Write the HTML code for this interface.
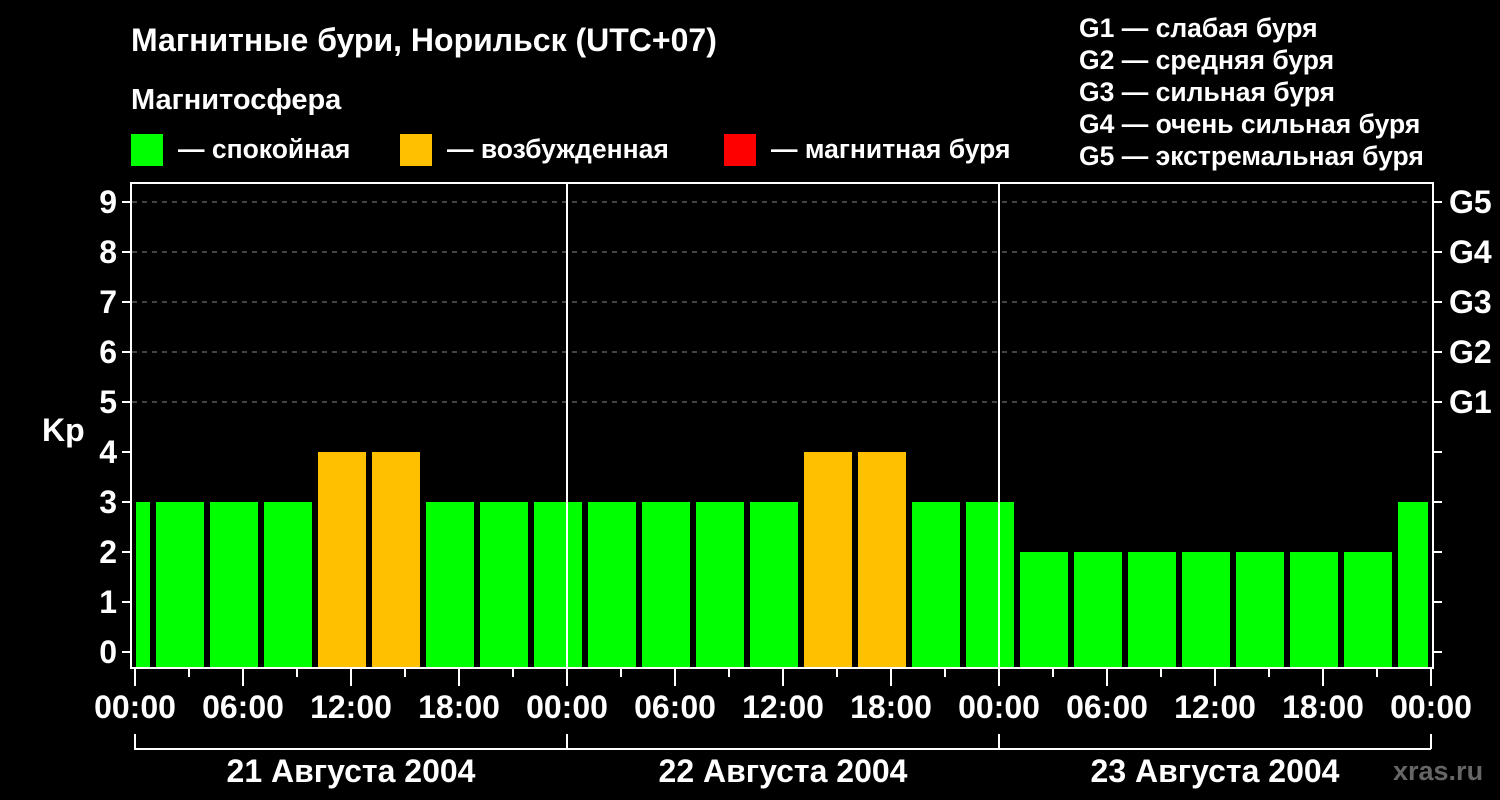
<!DOCTYPE html>
<html><head><meta charset="utf-8"><style>
body{margin:0;background:#000;width:1500px;height:800px;overflow:hidden}
svg{display:block}
text{font-family:"Liberation Sans",sans-serif;font-weight:bold;fill:#fff}
</style></head><body>
<svg width="1500" height="800" viewBox="0 0 1500 800">
<rect width="1500" height="800" fill="#000"/>
<text x="131" y="51" font-size="32">Магнитные бури, Норильск (UTC+07)</text>
<text x="131" y="109" font-size="29">Магнитосфера</text>
<rect x="131" y="134" width="32" height="32" fill="#00ff00"/>
<text x="178" y="158" font-size="26.5">— спокойная</text>
<rect x="400" y="134" width="32" height="32" fill="#ffc000"/>
<text x="447" y="158" font-size="26.5">— возбужденная</text>
<rect x="724" y="134" width="32" height="32" fill="#ff0000"/>
<text x="771" y="158" font-size="26.5">— магнитная буря</text>
<g font-size="26.5">
<text x="1079" y="37">G1 — слабая буря</text>
<text x="1079" y="69">G2 — средняя буря</text>
<text x="1079" y="101">G3 — сильная буря</text>
<text x="1079" y="133">G4 — очень сильная буря</text>
<text x="1079" y="165">G5 — экстремальная буря</text>
</g>
<g stroke="#888" stroke-dasharray="5,5" stroke-width="1">
<line x1="132" y1="202" x2="1432" y2="202"/><line x1="132" y1="252" x2="1432" y2="252"/>
<line x1="132" y1="302" x2="1432" y2="302"/><line x1="132" y1="352" x2="1432" y2="352"/>
<line x1="132" y1="402" x2="1432" y2="402"/>
</g>
<g id="bars">
<rect x="136" y="502" width="14" height="166" fill="#00ff00"/>
<rect x="156" y="502" width="48" height="166" fill="#00ff00"/>
<rect x="210" y="502" width="48" height="166" fill="#00ff00"/>
<rect x="264" y="502" width="48" height="166" fill="#00ff00"/>
<rect x="318" y="452" width="48" height="216" fill="#ffc000"/>
<rect x="372" y="452" width="48" height="216" fill="#ffc000"/>
<rect x="426" y="502" width="48" height="166" fill="#00ff00"/>
<rect x="480" y="502" width="48" height="166" fill="#00ff00"/>
<rect x="534" y="502" width="48" height="166" fill="#00ff00"/>
<rect x="588" y="502" width="48" height="166" fill="#00ff00"/>
<rect x="642" y="502" width="48" height="166" fill="#00ff00"/>
<rect x="696" y="502" width="48" height="166" fill="#00ff00"/>
<rect x="750" y="502" width="48" height="166" fill="#00ff00"/>
<rect x="804" y="452" width="48" height="216" fill="#ffc000"/>
<rect x="858" y="452" width="48" height="216" fill="#ffc000"/>
<rect x="912" y="502" width="48" height="166" fill="#00ff00"/>
<rect x="966" y="502" width="48" height="166" fill="#00ff00"/>
<rect x="1020" y="552" width="48" height="116" fill="#00ff00"/>
<rect x="1074" y="552" width="48" height="116" fill="#00ff00"/>
<rect x="1128" y="552" width="48" height="116" fill="#00ff00"/>
<rect x="1182" y="552" width="48" height="116" fill="#00ff00"/>
<rect x="1236" y="552" width="48" height="116" fill="#00ff00"/>
<rect x="1290" y="552" width="48" height="116" fill="#00ff00"/>
<rect x="1344" y="552" width="48" height="116" fill="#00ff00"/>
<rect x="1398" y="502" width="30" height="166" fill="#00ff00"/>
</g>
<g stroke="#fff" stroke-width="2" fill="none">
<rect x="131" y="183" width="1302" height="485"/>
<line x1="567" y1="183" x2="567" y2="668"/><line x1="999" y1="183" x2="999" y2="668"/>
<path d="M122 202H131M122 252H131M122 302H131M122 352H131M122 402H131M122 452H131M122 502H131M122 552H131M122 602H131M122 652H131"/>
<path d="M1433 202H1442M1433 252H1442M1433 302H1442M1433 352H1442M1433 402H1442M1433 452H1442M1433 502H1442M1433 552H1442M1433 602H1442M1433 652H1442"/>
<path d="M135 668V686M243 668V686M351 668V686M459 668V686M567 668V686M675 668V686M783 668V686M891 668V686M999 668V686M1107 668V686M1215 668V686M1323 668V686M1431 668V686"/>
<path d="M189 668V677M297 668V677M405 668V677M513 668V677M621 668V677M729 668V677M837 668V677M945 668V677M1053 668V677M1161 668V677M1269 668V677M1377 668V677"/>
<path d="M135 734V749H1431M567 734V749M999 734V749M1431 734V749"/>
</g>
<g font-size="32" text-anchor="end">
<text x="117" y="213">9</text><text x="117" y="263">8</text><text x="117" y="313">7</text>
<text x="117" y="363">6</text><text x="117" y="413">5</text><text x="117" y="463">4</text>
<text x="117" y="513">3</text><text x="117" y="563">2</text><text x="117" y="613">1</text>
<text x="117" y="663">0</text>
</g>
<text x="42" y="441" font-size="32">Kp</text>
<g font-size="32">
<text x="1449" y="213">G5</text><text x="1449" y="263">G4</text><text x="1449" y="313">G3</text>
<text x="1449" y="363">G2</text><text x="1449" y="413">G1</text>
</g>
<g font-size="32" text-anchor="middle">
<text x="135" y="718">00:00</text><text x="243" y="718">06:00</text><text x="351" y="718">12:00</text><text x="459" y="718">18:00</text>
<text x="567" y="718">00:00</text><text x="675" y="718">06:00</text><text x="783" y="718">12:00</text><text x="891" y="718">18:00</text>
<text x="999" y="718">00:00</text><text x="1107" y="718">06:00</text><text x="1215" y="718">12:00</text><text x="1323" y="718">18:00</text>
<text x="1431" y="718">00:00</text>
<text x="351" y="782">21 Августа 2004</text>
<text x="783" y="782">22 Августа 2004</text>
<text x="1215" y="782">23 Августа 2004</text>
</g>
<text x="1393" y="780" font-size="27" style="fill:#666">xras.ru</text>
</svg>
</body></html>
